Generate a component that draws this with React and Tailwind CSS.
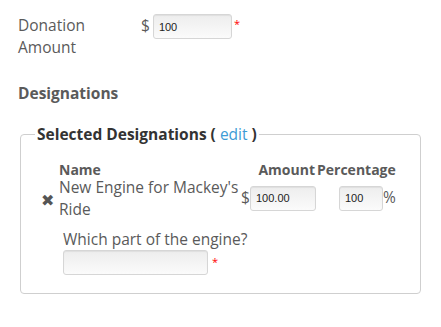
export default function App() {
  const font = { fontFamily: '"Open Sans", "Noto Sans", sans-serif' };
  const inputCls =
    "h-[25px] rounded-[3px] border border-[#d6d6d6] bg-gradient-to-b from-[#ededed] to-[#fbfbfb] px-[5px] text-[11px] text-[#222] shadow-[inset_0_1px_1px_rgba(0,0,0,0.06)] outline-none";
  const inputFont = { fontFamily: '"Liberation Sans", Arial, sans-serif' };
  return (
    <div className="w-[441px] h-[327px] bg-white px-[18px] pt-[14px] text-[#5a5a5a]" style={font}>
      <div className="flex items-start">
        <div className="w-[123px] text-[15.5px] leading-[22px]">
          Donation
          <br />
          Amount
        </div>
        <div className="flex items-start">
          <span className="text-[15.5px] leading-[22px] mr-[3px]">$</span>
          <input className={inputCls + " w-[79px]"} style={inputFont} defaultValue="100" />
          <span className="ml-[2px] mt-[2px] text-[#ff0000] text-[11px] leading-[16px]">*</span>
        </div>
      </div>
      <div className="mt-[24px] text-[15.5px] font-bold leading-[22px]">Designations</div>
      <fieldset className="mt-[19px] ml-[2px] w-[401px] rounded-[4px] border border-[#cfcfcf] px-[14px] pb-[18px] pt-[18px]">
        <legend className="px-[2px] text-[15.5px] font-bold leading-[22px] text-[#333]">
          Selected Designations ( <a className="font-normal text-[#3d9bd5]">edit</a> )
        </legend>
        <div className="pl-[6px]">
          <div className="grid grid-cols-[18px_182px_76px_80px] text-[14px] font-bold leading-[13px] text-[#5a5a5a]">
            <div></div>
            <div>Name</div>
            <div className="text-right pr-[2px]">Amount</div>
            <div>Percentage</div>
          </div>
          <div className="grid grid-cols-[18px_182px_76px_80px] items-center">
            <div className="text-[16px] pt-[3px] text-[#555]">✖</div>
            <div className="text-[15.5px] leading-[22px] whitespace-nowrap">
              New Engine for Mackey's
              <br />
              Ride
            </div>
            <div className="flex items-center">
              <span className="text-[15.5px] w-[9px]">$</span>
              <input className={inputCls + " w-[66px] h-[24px]"} style={inputFont} defaultValue="100.00" />
            </div>
            <div className="flex items-center">
              <input className={inputCls + " ml-[22px] w-[44px] h-[24px]"} style={inputFont} defaultValue="100" />
              <span className="text-[15.5px]">%</span>
            </div>
          </div>
          <div className="mt-[8px] pl-[22px]">
            <div className="text-[15.5px] leading-[22px]">Which part of the engine?</div>
            <div className="flex items-start">
              <input className={inputCls + " w-[145px]"} style={inputFont} />
              <span className="ml-[4px] mt-[4px] text-[#ff0000] text-[11px] leading-[16px]">*</span>
            </div>
          </div>
        </div>
      </fieldset>
    </div>
  );
}
